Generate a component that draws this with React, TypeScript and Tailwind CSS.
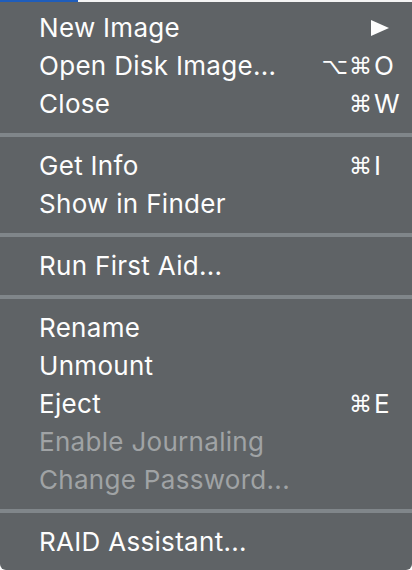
import React from "react"

type Item = {
  label: string
  mods?: string
  keyChar?: string
  submenu?: boolean
  disabled?: boolean
}

const groups: Item[][] = [
  [
    { label: "New Image", submenu: true },
    { label: "Open Disk Image...", mods: "⌥⌘", keyChar: "O" },
    { label: "Close", mods: "⌘", keyChar: "W" },
  ],
  [
    { label: "Get Info", mods: "⌘", keyChar: "I" },
    { label: "Show in Finder" },
  ],
  [{ label: "Run First Aid..." }],
  [
    { label: "Rename" },
    { label: "Unmount" },
    { label: "Eject", mods: "⌘", keyChar: "E" },
    { label: "Enable Journaling", disabled: true },
    { label: "Change Password...", disabled: true },
  ],
  [{ label: "RAID Assistant..." }],
]

function MenuRow({ item }: { item: Item }) {
  return (
    <div
      className={`flex h-[38px] items-center justify-between pl-[39px] pr-[12px] text-[26px] leading-none tracking-[0.3px] ${
        item.disabled ? "text-[#a0a3a5]" : "text-[#fdfdfd]"
      }`}
    >
      <span>{item.label}</span>
      {item.submenu && (
        <svg width="20" height="18" viewBox="0 0 20 18" className="mr-[10px]">
          <path d="M1 1 L19 9 L1 17 Z" fill="#fdfdfd" />
        </svg>
      )}
      {item.keyChar && (
        <span className="flex items-center">
          <span className="font-['DejaVu_Sans',sans-serif] text-[23px] tracking-[1px]">{item.mods}</span>
          <span className="ml-[1px] w-[26px]">{item.keyChar}</span>
        </span>
      )}
    </div>
  )
}

export default function App() {
  return (
    <div className="h-[570px] w-[412px] bg-white font-['Inter',sans-serif] antialiased">
      <div className="flex h-[2px]">
        <div className="w-[78px] bg-[#1f5dbb]" />
        <div className="flex-1 bg-[#f4f4f4]" />
      </div>
      <div className="h-[568px] rounded-b-[6px] bg-[#5f6366] pt-[7px]">
        {groups.map((group, gi) => (
          <div key={gi}>
            {gi > 0 && (
              <div className="flex h-[24px] items-center">
                <div className="h-[4px] w-full bg-[#80868a]" />
              </div>
            )}
            {group.map((item) => (
              <MenuRow key={item.label} item={item} />
            ))}
          </div>
        ))}
      </div>
    </div>
  )
}
